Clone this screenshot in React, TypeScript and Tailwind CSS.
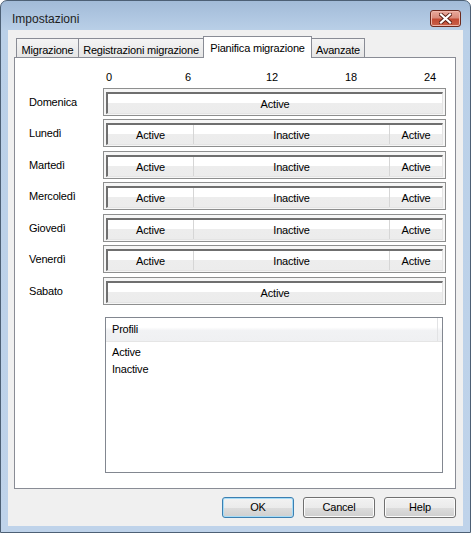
import React from 'react';

const days = [
  { name: 'Domenica', full: true, mt: 'mt-[4px]' },
  { name: 'Lunedì', full: false, mt: 'mt-[3px]' },
  { name: 'Martedì', full: false, mt: 'mt-[4px]' },
  { name: 'Mercoledì', full: false, mt: 'mt-[3px]' },
  { name: 'Giovedì', full: false, mt: 'mt-[4px]' },
  { name: 'Venerdì', full: false, mt: 'mt-[3px]' },
  { name: 'Sabato', full: true, mt: 'mt-[4px]' },
];

const tabs = [
  { label: 'Migrazione', w: 'w-[63px]' },
  { label: 'Registrazioni migrazione', w: 'w-[126px]' },
  { label: 'Pianifica migrazione', w: 'w-[109px]', active: true },
  { label: 'Avanzate', w: 'w-[54px]' },
];

const DayBar: React.FC<{ full: boolean }> = ({ full }) => (
  <div className="h-[28px] w-[343px] border border-[#8e8f8f] bg-[#f6f6f6] pt-[3px] px-[2px] pb-[1px]">
    <div className="h-full flex border-t-2 border-l-2 border-t-[#6f6f6f] border-l-[#6f6f6f] border-r border-b border-r-[#e4e4e4] border-b-[#e4e4e4] bg-[linear-gradient(to_bottom,#ffffff_0%,#ffffff_45%,#ededed_50%,#ececec_100%)]">
      {full ? (
        <div className="flex-1 flex items-center justify-center pt-[1px]">Active</div>
      ) : (
        <>
          <div className="w-[85px] flex items-center justify-center pt-[1px]">Active</div>
          <div className="w-[196px] flex items-center justify-center border-l border-[#d6d6d6] pt-[1px]">Inactive</div>
          <div className="flex-1 flex items-center justify-center border-l border-[#d6d6d6] pt-[1px]">Active</div>
        </>
      )}
    </div>
  </div>
);

const Btn: React.FC<{ label: string; focused?: boolean }> = ({ label, focused }) => (
  <div
    className={`w-[72px] h-[21px] rounded-[3px] border flex items-center justify-center bg-[linear-gradient(to_bottom,#f2f2f2_0%,#ebebeb_50%,#dddddd_51%,#cfcfcf_100%)] ${
      focused
        ? 'border-[#3c7fb1] shadow-[inset_0_0_0_1px_#a6dcf7]'
        : 'border-[#707070] shadow-[inset_0_0_0_1px_#fcfcfc]'
    }`}
  >
    {label}
  </div>
);

export default function App() {
  return (
    <div className="w-[471px] h-[533px] rounded-t-[7px] border border-[#4d6075] bg-[linear-gradient(to_bottom,#a2bbd8_0px,#bad0e8_30px,#bfd3ea_100%)] flex flex-col font-['Liberation_Sans',Arial,sans-serif] text-[11px] tracking-[-0.2px] text-black overflow-hidden">
      {/* Title bar */}
      <div className="h-[29px] flex items-start shrink-0">
        <div className="pl-[11px] pt-[11px] text-[12px] tracking-normal leading-[14px] text-[#1e1e1e]">Impostazioni</div>
        <div className="ml-auto mr-[9px] mt-[9px] w-[31px] h-[17px] rounded-[3px] border border-[#6d2a1e] bg-[linear-gradient(to_bottom,#e9a99c_0%,#d98b7b_45%,#c24a33_55%,#c9614a_100%)] shadow-[inset_0_0_0_1px_#efb7ab] flex items-center justify-center">
          <svg width="13" height="11" viewBox="0 0 13 11">
            <path d="M2 1.5 L11 9.5 M11 1.5 L2 9.5" stroke="#5a2117" strokeWidth="4" strokeLinecap="square" />
            <path d="M2 1.5 L11 9.5 M11 1.5 L2 9.5" stroke="#ffffff" strokeWidth="2.2" strokeLinecap="square" />
          </svg>
        </div>
      </div>

      {/* Client area */}
      <div className="mx-[7px] mb-[6px] flex-1 bg-[#f0f0f0] flex flex-col">
        <div className="h-[27px] flex items-end pl-[8px] shrink-0">
          {tabs.map((t) =>
            t.active ? (
              <div
                key={t.label}
                className={`${t.w} h-[22px] -mb-px -ml-px relative z-10 bg-white border border-b-0 border-[#898c95] flex justify-center pt-[3px]`}
              >
                {t.label}
              </div>
            ) : (
              <div
                key={t.label}
                className={`${t.w} h-[19px] -ml-px first:ml-0 border border-b-0 border-[#898c95] bg-[linear-gradient(to_bottom,#f4f4f4,#e6e6e6)] flex justify-center pt-[3px]`}
              >
                {t.label}
              </div>
            )
          )}
        </div>

        <div className="ml-[6px] mr-[7px] h-[432px] border border-[#898c95] bg-white pl-[14px] flex flex-col">
          <div className="mt-[12px] h-[14px] flex pl-[77px] leading-[14px]">
            <span className="w-[79px]">0</span>
            <span className="w-[81px]">6</span>
            <span className="w-[79px]">12</span>
            <span className="w-[79px]">18</span>
            <span>24</span>
          </div>

          {days.map((d) => (
            <div key={d.name} className={`${d.mt} flex items-center`}>
              <div className="w-[74px] pt-[1px]">{d.name}</div>
              <DayBar full={d.full} />
            </div>
          ))}

          <div className="mt-[12px] ml-[76px] w-[338px] h-[156px] border border-[#828790] flex flex-col">
            <div className="h-[24px] flex border-b border-[#e5e5e5] bg-[linear-gradient(to_bottom,#ffffff_0%,#ffffff_40%,#f1f2f4_55%,#eff0f2_100%)]">
              <div className="flex-1 pl-[6px] flex items-center border-r border-[#e2e3e5]">Profili</div>
              <div className="w-[4px]" />
            </div>
            <div className="pt-[2px] pl-[6px] leading-[17px]">
              <div>Active</div>
              <div>Inactive</div>
            </div>
          </div>
        </div>

        <div className="mt-[8px] flex justify-end gap-[9px] pr-[7px]">
          <Btn label="OK" focused />
          <Btn label="Cancel" />
          <Btn label="Help" />
        </div>
      </div>
    </div>
  );
}
